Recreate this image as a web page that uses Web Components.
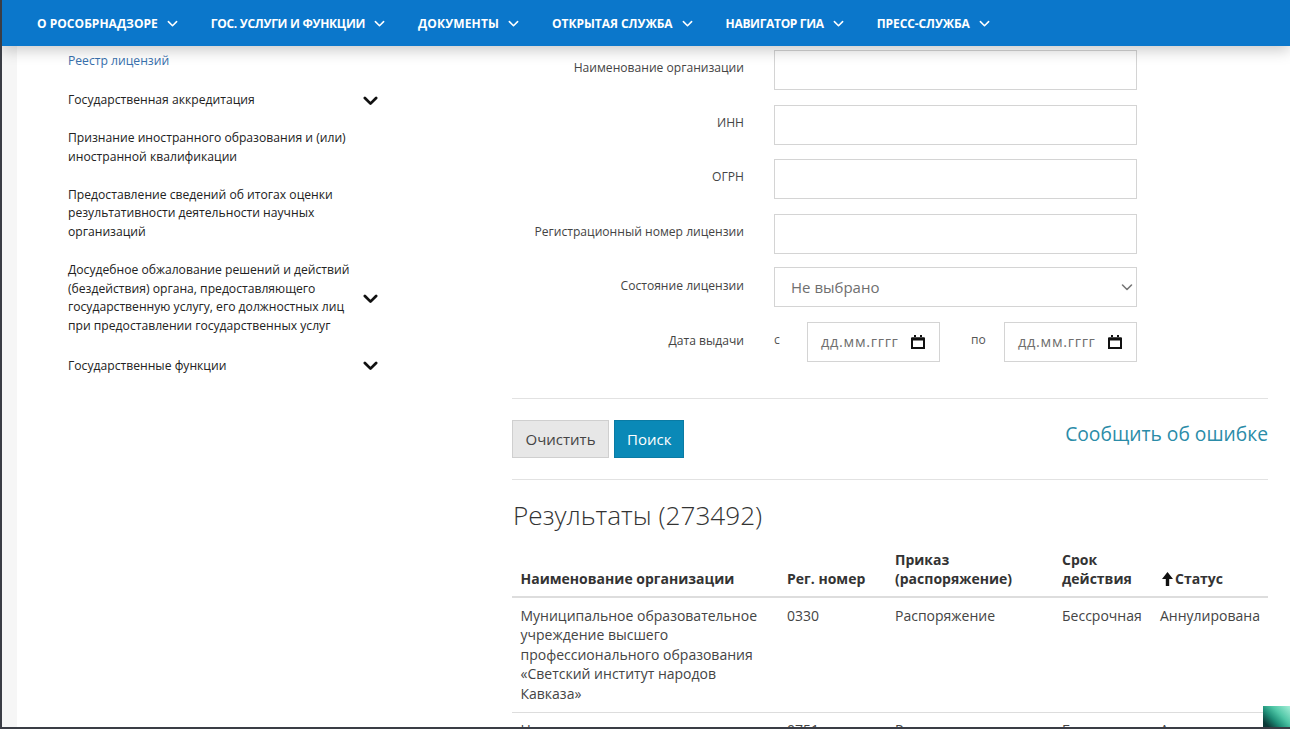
<!doctype html>
<html lang="ru">
<head>
<meta charset="utf-8">
<title>Реестр лицензий</title>
<style>
  html, body { margin: 0; height: 100%; overflow: hidden; background: #fff; }
  body { font-family: "Open Sans", "Liberation Sans", sans-serif; color: #333; }
</style>
</head>
<body>
<app-frame>
  <top-nav slot="nav">
    <nav-link style="letter-spacing:.03px">О Рособрнадзоре</nav-link>
    <nav-link style="letter-spacing:-.29px">Гос. услуги и функции</nav-link>
    <nav-link style="letter-spacing:.12px">Документы</nav-link>
    <nav-link style="letter-spacing:-.03px">Открытая служба</nav-link>
    <nav-link style="letter-spacing:-.33px">Навигатор ГИА</nav-link>
    <nav-link style="letter-spacing:-.1px">Пресс-служба</nav-link>
  </top-nav>

  <side-menu slot="side">
    <side-item active>Реестр лицензий</side-item>
    <side-item expandable spaced>Государственная аккредитация</side-item>
    <side-item>Признание иностранного образования и (или) иностранной квалификации</side-item>
    <side-item>Предоставление сведений об итогах оценки результативности деятельности научных организаций</side-item>
    <side-item expandable>Досудебное обжалование решений и действий (бездействия) органа, предоставляющего государственную услугу, его должностных лиц при предоставлении государственных услуг</side-item>
    <side-item expandable spaced>Государственные функции</side-item>
  </side-menu>

  <search-form slot="main">
    <form-row label="Наименование организации"><text-field></text-field></form-row>
    <form-row label="ИНН"><text-field></text-field></form-row>
    <form-row label="ОГРН"><text-field></text-field></form-row>
    <form-row label="Регистрационный номер лицензии"><text-field></text-field></form-row>
    <form-row label="Состояние лицензии"><select-field>Не выбрано</select-field></form-row>
    <form-row label="Дата выдачи"><date-range></date-range></form-row>
  </search-form>

  <form-actions slot="main"></form-actions>
  <results-table slot="main" count="273492"></results-table>
</app-frame>

<script>
const html = String.raw;

const chevron = (size, width) => html`<svg width="${size}" height="${size}" viewBox="0 0 12 12" fill="none"
  stroke="currentColor" stroke-width="${width}" stroke-linecap="round" stroke-linejoin="round"><path d="M1.5 4l4.5 4.5L10.5 4"/></svg>`;

class AppFrame extends HTMLElement {
  constructor() {
    super();
    this.attachShadow({ mode: "open" });
    this.shadowRoot.innerHTML = html`
      <style>
        :host {
          display: flex;
          flex-direction: column;
          position: relative;
          height: 729px;
          box-sizing: border-box;
          border-left: 2px solid #3a3d45;
          border-bottom: 2px solid #3a3d45;
          overflow: hidden;
        }
        .body {
          flex: 1;
          min-height: 0;
          display: flex;
          border-left: 15px solid #f6f6f6;
          padding: 4px 22px 0 51px;
        }
        .side { width: 444px; flex: none; }
        .main { flex: 1; min-width: 0; }
        .corner {
          position: absolute;
          right: 0;
          bottom: 0;
          width: 27px;
          height: 21px;
          background: linear-gradient(225deg, #a5efd8 0%, #4fc6a6 38%, #1f8f78 62%, #0c3a38 88%);
        }
      </style>
      <slot name="nav"></slot>
      <div class="body">
        <div class="side"><slot name="side"></slot></div>
        <div class="main"><slot name="main"></slot></div>
      </div>
      <div class="corner"></div>
    `;
  }
}

class TopNav extends HTMLElement {
  constructor() {
    super();
    this.attachShadow({ mode: "open" });
    this.shadowRoot.innerHTML = html`
      <style>
        :host {
          display: flex;
          align-items: center;
          gap: 33px;
          flex: none;
          height: 46px;
          padding: 0 0 0 35px;
          background: #0b77cb;
          box-shadow: 0 4px 14px rgba(0, 0, 0, .22);
          position: relative;
          z-index: 2;
        }
      </style>
      <slot></slot>
    `;
  }
}

class NavLink extends HTMLElement {
  constructor() {
    super();
    this.attachShadow({ mode: "open" });
    this.shadowRoot.innerHTML = html`
      <style>
        :host {
          display: inline-flex;
          align-items: center;
          gap: 9px;
          color: #fff;
          font-size: 12px;
          font-weight: 700;
          text-transform: uppercase;
          white-space: nowrap;
        }
        svg { display: block; }
      </style>
      <slot></slot>${chevron(11, 1.7)}
    `;
  }
}

class SideMenu extends HTMLElement {
  constructor() {
    super();
    this.attachShadow({ mode: "open" });
    this.shadowRoot.innerHTML = html`
      <style>
        :host { display: flex; flex-direction: column; gap: 19.3px; padding: 1.5px 134px 0 0; }
      </style>
      <slot></slot>
    `;
  }
}

class SideItem extends HTMLElement {
  constructor() {
    super();
    this.attachShadow({ mode: "open" });
    const icon = this.hasAttribute("expandable") ? chevron(15, 2.2) : "";
    this.shadowRoot.innerHTML = html`
      <style>
        :host {
          display: flex;
          align-items: center;
          justify-content: space-between;
          font-size: 12.15px;
          line-height: 18.7px;
          color: #222;
        }
        :host([active]) { color: #3870ad; }
        :host([spaced]) { padding-top: 1.4px; }
        .text { width: 286px; }
        svg { display: block; flex: none; color: #111; }
      </style>
      <div class="text"><slot></slot></div>${icon}
    `;
  }
}

class SearchForm extends HTMLElement {
  constructor() {
    super();
    this.attachShadow({ mode: "open" });
    this.shadowRoot.innerHTML = html`
      <style>
        :host {
          display: flex;
          flex-direction: column;
          gap: 14.5px;
          padding-bottom: 35px;
          border-bottom: 1px solid #e2e2e2;
        }
      </style>
      <slot></slot>
    `;
  }
}

class FormRow extends HTMLElement {
  constructor() {
    super();
    this.attachShadow({ mode: "open" });
    this.shadowRoot.innerHTML = html`
      <style>
        :host {
          display: grid;
          grid-template-columns: 232px 363px;
          column-gap: 30px;
          align-items: start;
          font-size: 12.1px;
          color: #444;
        }
        label { text-align: right; line-height: 36px; white-space: nowrap; }
      </style>
      <label></label>
      <slot></slot>
    `;
    this.shadowRoot.querySelector("label").textContent = this.getAttribute("label");
  }
}

class TextField extends HTMLElement {
  constructor() {
    super();
    this.attachShadow({ mode: "open" });
    this.shadowRoot.innerHTML = html`
      <style>
        :host { display: block; }
        input {
          display: block;
          width: 100%;
          height: 40px;
          box-sizing: border-box;
          border: 1px solid #d4d4d4;
          background: #fff;
          padding: 0 16px;
          margin: 0;
          outline: none;
        }
      </style>
      <input type="text">
    `;
  }
}

class SelectField extends HTMLElement {
  constructor() {
    super();
    this.attachShadow({ mode: "open" });
    this.shadowRoot.innerHTML = html`
      <style>
        :host {
          display: flex;
          align-items: center;
          justify-content: space-between;
          height: 40px;
          margin: -1px 0 1px;
          box-sizing: border-box;
          border: 1px solid #d4d4d4;
          padding: 0 3px 0 16px;
          font-size: 15px;
          color: #6f6f6f;
        }
        svg { display: block; color: #777; }
      </style>
      <slot></slot>${chevron(12, 1.6)}
    `;
  }
}

class DateRange extends HTMLElement {
  constructor() {
    super();
    this.attachShadow({ mode: "open" });
    this.shadowRoot.innerHTML = html`
      <style>
        :host {
          display: grid;
          grid-template-columns: 33px 133px 64px 133px;
          align-items: start;
          margin: -1px 0 1px;
          font-size: 12.1px;
          color: #555;
        }
        span { line-height: 36px; }
        .to { padding-left: 31px; }
      </style>
      <span>с</span>
      <date-field></date-field>
      <span class="to">по</span>
      <date-field></date-field>
    `;
  }
}

class DateField extends HTMLElement {
  constructor() {
    super();
    this.attachShadow({ mode: "open" });
    this.shadowRoot.innerHTML = html`
      <style>
        :host {
          display: flex;
          align-items: center;
          justify-content: space-between;
          height: 40px;
          box-sizing: border-box;
          border: 1px solid #d4d4d4;
          padding: 0 14px 0 13px;
          font-size: 14.5px;
          letter-spacing: .7px;
          color: #6f6f6f;
          white-space: nowrap;
        }
        svg { display: block; flex: none; }
      </style>
      <span>дд.мм.гггг</span>
      <svg width="14" height="14" viewBox="0 0 14 14" fill="none" stroke="#111" stroke-width="2">
        <path d="M1 3.5h12v9.5H1z"/><path d="M1 4h12" stroke-width="3"/><path d="M4 0v2M10 0v2"/>
      </svg>
    `;
  }
}

class FormActions extends HTMLElement {
  constructor() {
    super();
    this.attachShadow({ mode: "open" });
    this.shadowRoot.innerHTML = html`
      <style>
        :host {
          display: flex;
          align-items: flex-start;
          gap: 5px;
          padding: 21px 0 21px;
          border-bottom: 1px solid #e2e2e2;
        }
        button {
          height: 38px;
          box-sizing: border-box;
          margin: 0;
          padding: 0 12.5px;
          font: 15px "Open Sans", "Liberation Sans", sans-serif;
        }
        .clear { background: #e7e7e7; border: 1px solid #cfcfcf; color: #444; }
        .go { background: #0a89b7; border: 1px solid #0a7ba4; color: #fff; padding: 0 12px; }
        a {
          margin-left: auto;
          line-height: 28px;
          font-size: 19.25px;
          color: #2b8ca8;
          text-decoration: none;
        }
      </style>
      <button class="clear">Очистить</button>
      <button class="go">Поиск</button>
      <a href="#">Сообщить об ошибке</a>
    `;
  }
}

class ResultsTable extends HTMLElement {
  constructor() {
    super();
    this.attachShadow({ mode: "open" });
    this.shadowRoot.innerHTML = html`
      <style>
        :host { display: block; font-size: 14px; line-height: 19.6px; color: #444; }
        h2 {
          margin: 0;
          padding: 17px 0 9px 1px;
          font-size: 26.15px;
          line-height: 36px;
          font-weight: 300;
          color: #333;
        }
        table { width: 100%; table-layout: fixed; border-collapse: collapse; }
        th, td { padding: 8px 4px 8px 8px; text-align: left; vertical-align: bottom; }
        th { font-weight: 700; color: #333; padding-bottom: 7px; border-bottom: 2px solid #ddd; }
        td { vertical-align: top; border-bottom: 1px solid #ddd; }
        tbody tr + tr td { padding-top: 7px; }
        th:first-child, td:first-child { padding-left: 8.5px; }
        .nowrap { white-space: nowrap; }
        .sort { display: inline-block; vertical-align: -2px; margin: 0 1px; }
      </style>
      <h2>Результаты (<span id="count"></span>)</h2>
      <table>
        <colgroup>
          <col style="width:267px"><col style="width:108px"><col style="width:167px"><col style="width:98px"><col style="width:116px">
        </colgroup>
        <thead>
          <tr>
            <th>Наименование организации</th>
            <th class="nowrap">Рег. номер</th>
            <th>Приказ (распоряжение)</th>
            <th>Срок действия</th>
            <th class="nowrap"><svg class="sort" width="13" height="14" viewBox="0 0 13 14" fill="#111"><path d="M6.5 0l5.5 7H8.2v7H4.8V7H1z"/></svg>Статус</th>
          </tr>
        </thead>
        <tbody>
          <tr>
            <td>Муниципальное образовательное учреждение высшего профессионального образования «Светский институт народов Кавказа»</td>
            <td>0330</td>
            <td>Распоряжение</td>
            <td class="nowrap">Бессрочная</td>
            <td class="nowrap">Аннулирована</td>
          </tr>
          <tr>
            <td>Негосударственное образовательное учреждение</td>
            <td>0751</td>
            <td>Распоряжение</td>
            <td class="nowrap">Бессрочная</td>
            <td class="nowrap">Аннулирована</td>
          </tr>
        </tbody>
      </table>
    `;
    this.shadowRoot.querySelector("#count").textContent = this.getAttribute("count");
  }
}

customElements.define("app-frame", AppFrame);
customElements.define("top-nav", TopNav);
customElements.define("nav-link", NavLink);
customElements.define("side-menu", SideMenu);
customElements.define("side-item", SideItem);
customElements.define("search-form", SearchForm);
customElements.define("form-row", FormRow);
customElements.define("text-field", TextField);
customElements.define("select-field", SelectField);
customElements.define("date-range", DateRange);
customElements.define("date-field", DateField);
customElements.define("form-actions", FormActions);
customElements.define("results-table", ResultsTable);
</script>
</body>
</html>
